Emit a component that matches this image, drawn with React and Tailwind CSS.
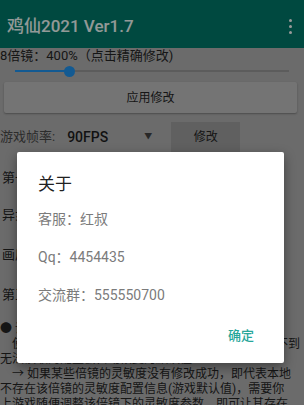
import React from 'react'

const hiddenRows = [
  { text: '第一人称灵敏度：默认配置', h: 'h-[36px]' },
  { text: '异步加载：开启', h: 'h-[38px]' },
  { text: '画质：极清  帧率：高', h: 'h-[42px]' },
  { text: '第三人称灵敏度：默认配置', h: 'h-[38px]' },
]

const notes = [
  '● 说明：调整完成后点击应用修改即可生效',
  '　使用前请备份好游戏原有配置文件，以免出错后找不到',
  '无法读取的配置会自动恢复为默认值',
  '    → 如果某些倍镜的灵敏度没有修改成功，即代表本地',
  '不存在该倍镜的灵敏度配置信息(游戏默认值)，需要你',
  '上游戏随便调整该倍镜下的灵敏度参数，即可让其存在',
]

export default function App() {
  return (
    <div className="relative h-[405px] w-[304px] overflow-hidden bg-[#b3b3b3] font-[Roboto,'Noto_Sans_CJK_SC',sans-serif]">
      {/* app bar */}
      <div className="flex h-[48px] items-center justify-between bg-[#007a6b] pl-[7px] pr-[12px] pt-[5px]">
        <span className="text-[17px] font-medium leading-none text-[#f4fffc]">鸡仙2021 Ver1.7</span>
        <div className="flex flex-col gap-[3px]">
          <span className="h-[3px] w-[3px] rounded-full bg-white" />
          <span className="h-[3px] w-[3px] rounded-full bg-white" />
          <span className="h-[3px] w-[3px] rounded-full bg-white" />
        </div>
      </div>

      <div className="text-[#262626]">
        <div className="h-[16px] whitespace-nowrap text-[13px] leading-[16px]">8倍镜：400%（点击精确修改)</div>

        {/* slider */}
        <div className="relative mx-[15px] flex h-[14px] items-center">
          <div className="h-[2px] w-full bg-[#9a9a9a]" />
          <div className="absolute left-0 h-[2px] w-[54px] bg-[#2196f3]" />
          <div className="absolute left-[49px] h-[11px] w-[11px] rounded-full bg-[#2196f3]" />
        </div>

        <button className="ml-[4px] mt-[4px] flex h-[31px] w-[293px] items-center justify-center rounded-[2px] bg-[#c2c2c2] text-[12px] shadow-[0_1px_2px_rgba(0,0,0,0.3)]">
          应用修改
        </button>

        <div className="mt-[9px] flex h-[30px] items-center">
          <span className="text-[13px] text-[#4a4a4a]">游戏帧率:</span>
          <span className="ml-[12px] text-[14px] font-medium text-[#1e1e1e]">90FPS</span>
          <span className="ml-[36px] text-[8px] text-[#444]">▼</span>
          <button className="ml-[19px] flex h-[30px] w-[69px] items-center justify-center bg-[#a0a0a0] text-[12px]">
            修改
          </button>
        </div>

        <div className="mt-[8px]">
          {hiddenRows.map((r) => (
            <div key={r.text} className={`${r.h} flex items-center whitespace-nowrap pl-[2px] text-[13px]`}>
              {r.text}
            </div>
          ))}
        </div>

        <div className="mt-[8px]">
          {notes.map((n) => (
            <div key={n} className="h-[15px] overflow-hidden whitespace-pre text-[12px] leading-[15px]">
              {n}
            </div>
          ))}
        </div>
      </div>

      {/* dim layer */}
      <div className="absolute inset-0 bg-black/40" />

      {/* dialog */}
      <div className="absolute left-[17px] top-[152px] w-[267px] rounded-[2px] bg-white pb-[9px] pl-[21px] pr-[30px] pt-[22px] shadow-[0_4px_12px_rgba(0,0,0,0.4)]">
        <div className="text-[17px] leading-[20px] text-[#212121]">关于</div>
        <div className="mt-[15px] flex flex-col gap-[18px] text-[14px] leading-[20px] text-[#7b7b7b]">
          <div>客服：红叔</div>
          <div>Qq：4454435</div>
          <div>交流群：555550700</div>
        </div>
        <div className="mt-[13px] flex justify-end">
          <button className="flex h-[36px] items-center text-[13px] font-medium text-[#26a69a]">确定</button>
        </div>
      </div>
    </div>
  )
}
